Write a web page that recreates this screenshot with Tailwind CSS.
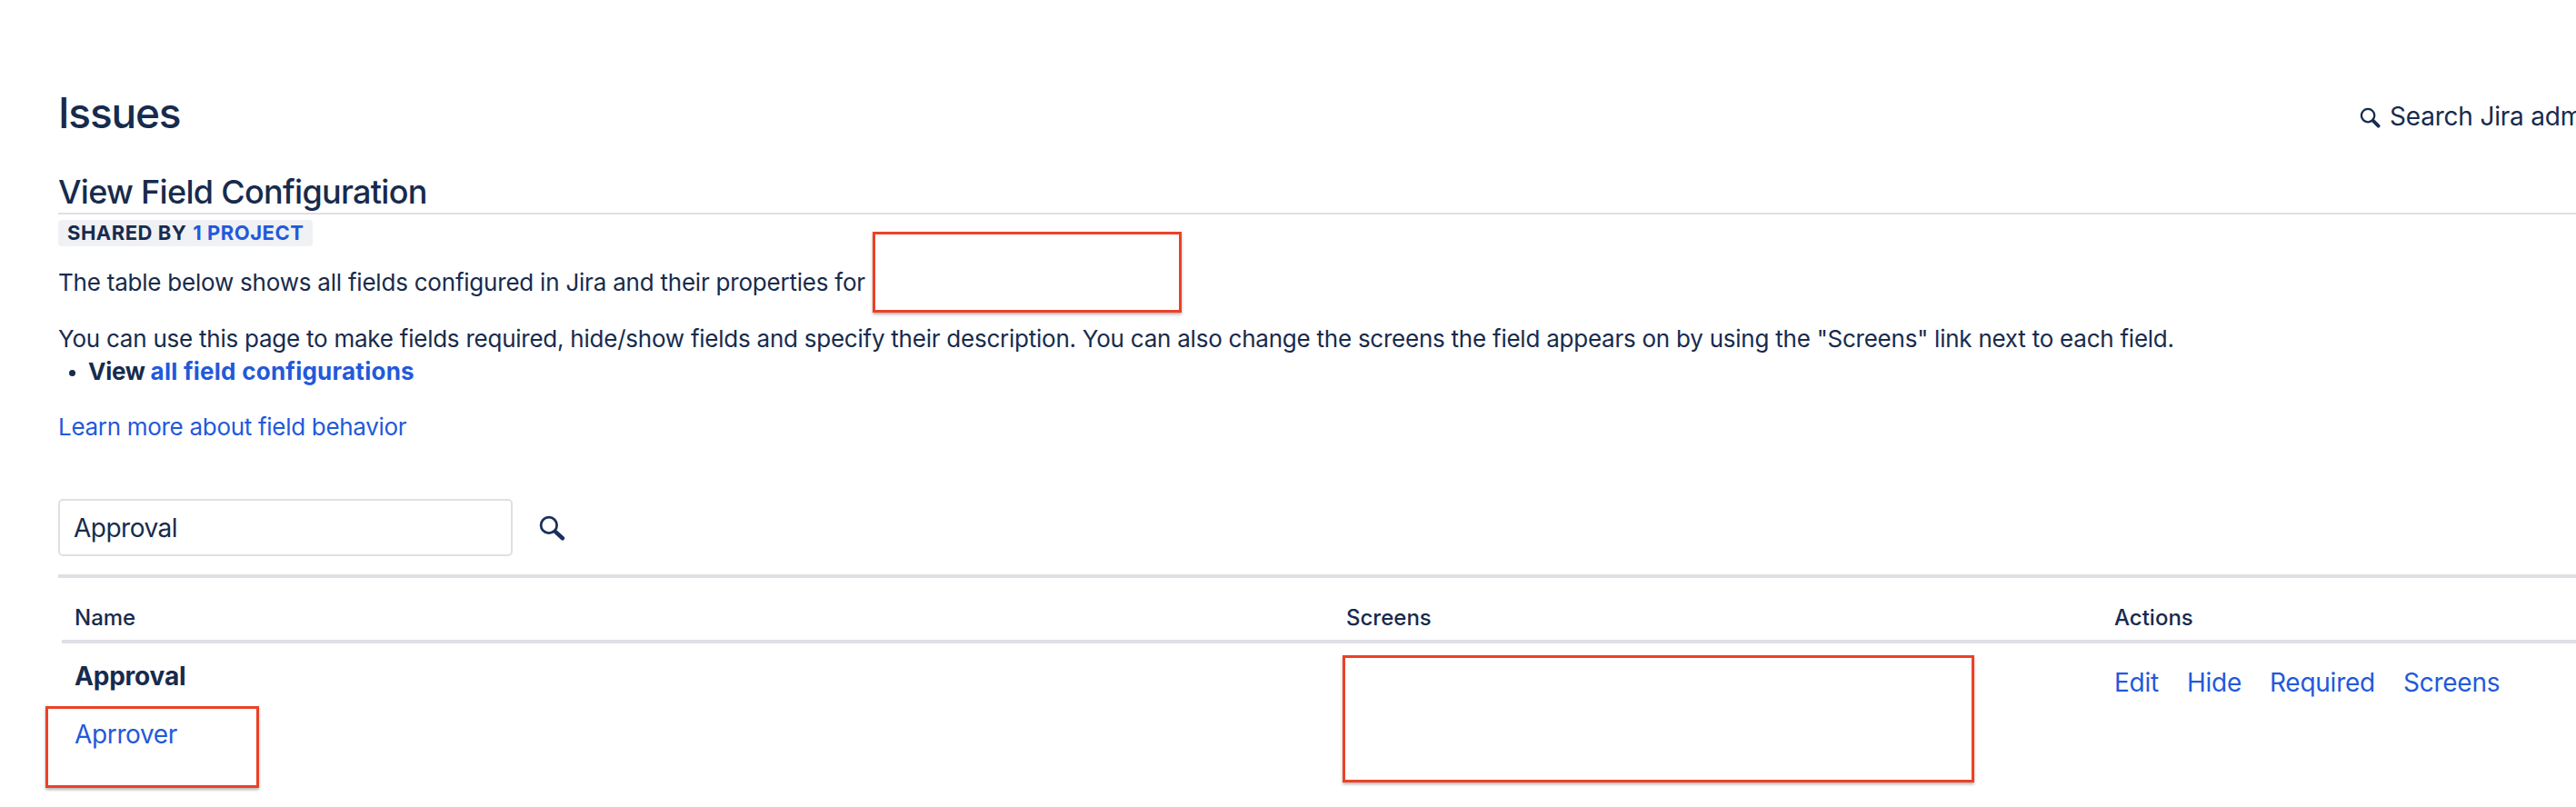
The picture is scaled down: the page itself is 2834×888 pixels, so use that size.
<!DOCTYPE html>
<html lang="en">
<head>
  <meta charset="UTF-8" />
  <title>View Field Configuration</title>
  <script src="https://cdn.jsdelivr.net/npm/@tailwindcss/browser@4"></script>
</head>
<body class="relative h-[888px] overflow-hidden bg-white font-['Inter',sans-serif] text-[#172b4d]">

  <header class="flex justify-between pt-[94px] pl-[64px]">
    <h1 class="text-[46px] leading-[60px] font-medium tracking-[-1.2px]">Issues</h1>
    <div class="flex h-[68px] w-[238px] shrink-0 items-start gap-[10px] overflow-hidden pt-[17px]">
      <!-- search icon -->
      <svg class="mt-[7px] h-[23px] w-[23px] shrink-0" viewBox="0 0 24 24" fill="none" stroke="currentColor">
        <circle cx="9.5" cy="9.5" r="7.5" stroke-width="2.4"></circle>
        <path d="M15.5 15.5l6 6" stroke-width="4" stroke-linecap="round"></path>
      </svg>
      <span class="text-[28px] leading-[34px] tracking-[-0.2px] whitespace-nowrap">Search Jira admin</span>
    </div>
  </header>

  <main class="pl-[64px]">
    <h2 class="mt-[26px] border-b-2 border-[#dfdfe6] text-[36px] leading-[46px] font-medium tracking-[-0.7px]">View Field Configuration</h2>

    <div class="mt-[6px] flex h-[29px] w-[280px] items-center rounded-[4px] bg-[#f0f1f4] pl-[10px] text-[22px] font-bold tracking-[0.5px] whitespace-nowrap">
      SHARED BY <a class="ml-[7px] text-[#2259db]" href="#">1 PROJECT</a>
    </div>

    <p class="mt-[22px] text-[26px] leading-[36px] tracking-[-0.22px]">The table below shows all fields configured in Jira and their properties for</p>
    <p class="mt-[26px] text-[26px] leading-[36px] tracking-[-0.24px] whitespace-nowrap">You can use this page to make fields required, hide/show fields and specify their description. You can also change the screens the field appears on by using the "Screens" link next to each field.</p>
    <ul class="list-disc pl-[33px] text-[26px] leading-[36px] font-bold tracking-[-0.25px] marker:text-[22px]">
      <li>View <a class="tracking-[0.25px] text-[#2259db]" href="#">all field configurations</a></li>
    </ul>
    <p class="mt-[25px] text-[26px] leading-[36px] tracking-[-0.3px]"><a class="text-[#2259db]" href="#">Learn more about field behavior</a></p>

    <form class="mt-[61px] flex items-center gap-[28px]">
      <input class="h-[63px] w-[500px] rounded-[5px] border-2 border-[#dfdfe6] px-[15px] text-[28px] tracking-[-0.5px] outline-none" value="Approval" />
      <svg class="h-[30px] w-[30px] text-[#1b2f5c]" viewBox="0 0 24 24" fill="none" stroke="currentColor">
        <circle cx="9.5" cy="9.5" r="7" stroke-width="2.2"></circle>
        <path d="M15.5 15.5l6 5.5" stroke-width="3.6" stroke-linecap="round"></path>
      </svg>
    </form>

    <div class="mt-[20px] border-t-4 border-[#dfdfe6] pl-[4px]">
      <table class="w-full table-fixed text-left">
        <thead>
          <tr class="border-b-4 border-[#dfdfe6] text-[24px]">
            <th class="h-[70px] w-[1397px] pt-[20px] pl-[14px] font-medium">Name</th>
            <th class="w-[846px] pt-[20px] pl-[16px] font-medium">Screens</th>
            <th class="pt-[20px] pl-[15px] font-medium">Actions</th>
          </tr>
        </thead>
        <tbody>
          <tr class="align-top text-[28px]">
            <td class="pt-[18px] pl-[14px]">
              <div class="text-[28px] leading-[36px] font-bold tracking-[-0.2px]">Approval</div>
              <a class="mt-[28px] block leading-[36px] tracking-[-0.35px] text-[#2259db]" href="#">Aprrover</a>
            </td>
            <td></td>
            <td class="pt-[25px] pl-[15px] leading-[36px] tracking-[-0.25px] whitespace-nowrap text-[#2259db]">
              <div class="flex gap-[31px]">
                <a href="#">Edit</a><a href="#">Hide</a><a href="#">Required</a><a href="#">Screens</a>
              </div>
            </td>
          </tr>
        </tbody>
      </table>
    </div>
  </main>

  <!-- red annotation boxes drawn over the screenshot -->
  <div class="absolute top-[255px] left-[960px] h-[89px] w-[340px] border-[3px] border-[#ec4126] shadow-[0_2px_3px_rgba(0,0,0,0.3)]"></div>
  <div class="absolute top-[777px] left-[50px] h-[90px] w-[235px] border-[3px] border-[#ec4126] shadow-[0_2px_3px_rgba(0,0,0,0.3)]"></div>
  <div class="absolute top-[721px] left-[1477px] h-[140px] w-[695px] border-[3px] border-[#ec4126] shadow-[0_2px_3px_rgba(0,0,0,0.3)]"></div>

</body>
</html>
